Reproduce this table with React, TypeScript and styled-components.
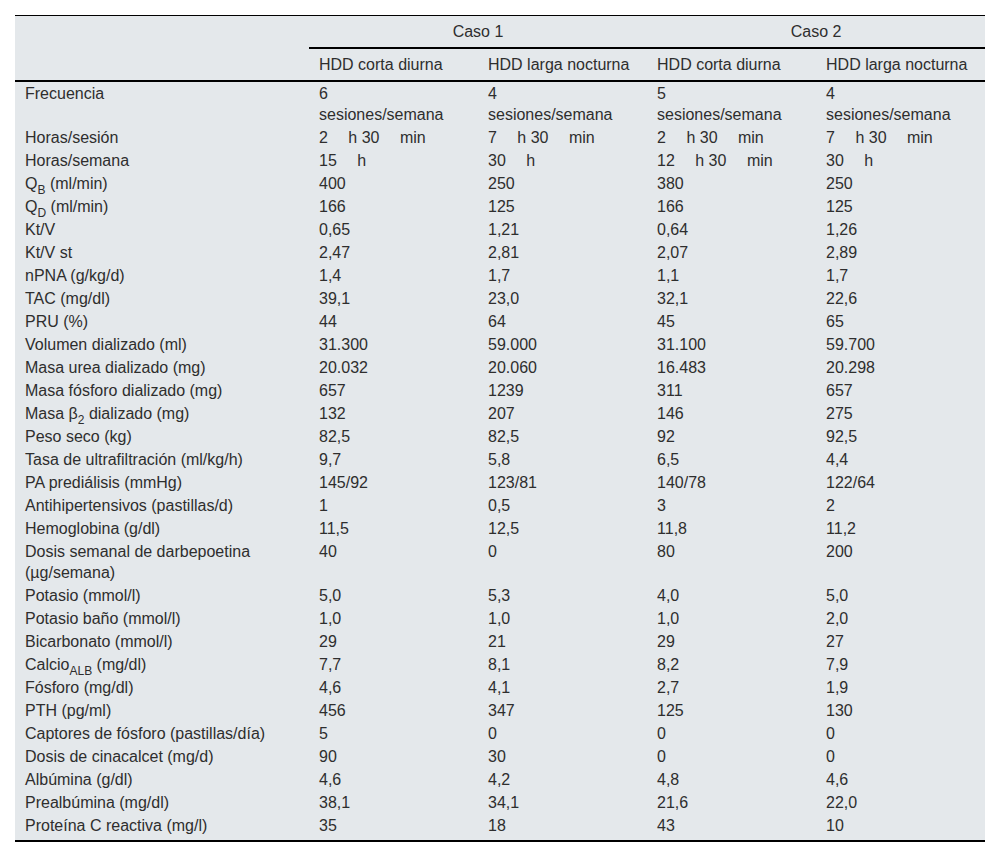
import React from "react";
import styled, { createGlobalStyle } from "styled-components";

const Global = createGlobalStyle`
  html, body { margin: 0; padding: 0; background: #ffffff; }
  body { font-family: "Liberation Sans", Arial, sans-serif; }
`;

const Page = styled.div`
  padding: 15px 15px 0 15px;
`;

const Table = styled.table`
  width: 970px;
  border-collapse: collapse;
  table-layout: fixed;
  background: #e4e8eb;
  color: #2e2e2e;
  font-family: "Liberation Sans", Arial, sans-serif;
  font-size: 16px;
  line-height: 21px;
  border-top: 1px solid #000;
  border-bottom: 2px solid #000;
`;

const LabelCol = styled.col`
  width: 294px;
`;

const DataCol = styled.col`
  width: 169px;
`;

const HeadRow = styled.tr<{ $rule?: "group" | "full" }>`
  border-bottom: ${(p) => (p.$rule === "full" ? "2px solid #000" : "none")};
`;

const GroupHead = styled.th`
  padding: 5px 10px;
  font-weight: normal;
  text-align: center;
  border-bottom: 2px solid #000;
`;

const BlankHead = styled.th`
  padding: 5px 10px;
  font-weight: normal;
`;

const SubHead = styled.th`
  padding: 5px 10px;
  font-weight: normal;
  text-align: left;
  white-space: nowrap;
`;

const Row = styled.tr<{ $last?: boolean }>`
  & > td {
    padding-bottom: ${(p) => (p.$last ? "4px" : "1px")};
  }
`;

const Cell = styled.td`
  padding: 1px 10px;
  text-align: left;
  vertical-align: top;
`;

const Sub = styled.sub`
  font-size: 12px;
  line-height: 0;
  vertical-align: -5px;
`;

const Hsp = styled.span`
  display: inline-block;
  width: 16px;
`;

type Val = React.ReactNode;

const dur = (a: string, h?: string, m?: boolean): Val => (
  <>
    {a} <Hsp />
    h{h ? ` ${h}` : ""}
    {m ? (
      <>
        {" "}
        <Hsp />
        min
      </>
    ) : null}
  </>
);

const ses = (n: string): Val => (
  <>
    {n}
    <br />
    sesiones/semana
  </>
);

const rows: [Val, Val, Val, Val, Val][] = [
  ["Frecuencia", ses("6"), ses("4"), ses("5"), ses("4")],
  ["Horas/sesión", dur("2", "30", true), dur("7", "30", true), dur("2", "30", true), dur("7", "30", true)],
  ["Horas/semana", dur("15"), dur("30"), dur("12", "30", true), dur("30")],
  [<>Q<Sub>B</Sub> (ml/min)</>, "400", "250", "380", "250"],
  [<>Q<Sub>D</Sub> (ml/min)</>, "166", "125", "166", "125"],
  ["Kt/V", "0,65", "1,21", "0,64", "1,26"],
  ["Kt/V st", "2,47", "2,81", "2,07", "2,89"],
  ["nPNA (g/kg/d)", "1,4", "1,7", "1,1", "1,7"],
  ["TAC (mg/dl)", "39,1", "23,0", "32,1", "22,6"],
  ["PRU (%)", "44", "64", "45", "65"],
  ["Volumen dializado (ml)", "31.300", "59.000", "31.100", "59.700"],
  ["Masa urea dializado (mg)", "20.032", "20.060", "16.483", "20.298"],
  ["Masa fósforo dializado (mg)", "657", "1239", "311", "657"],
  [<>Masa β<Sub>2</Sub> dializado (mg)</>, "132", "207", "146", "275"],
  ["Peso seco (kg)", "82,5", "82,5", "92", "92,5"],
  ["Tasa de ultrafiltración (ml/kg/h)", "9,7", "5,8", "6,5", "4,4"],
  ["PA prediálisis (mmHg)", "145/92", "123/81", "140/78", "122/64"],
  ["Antihipertensivos (pastillas/d)", "1", "0,5", "3", "2"],
  ["Hemoglobina (g/dl)", "11,5", "12,5", "11,8", "11,2"],
  ["Dosis semanal de darbepoetina (µg/semana)", "40", "0", "80", "200"],
  ["Potasio (mmol/l)", "5,0", "5,3", "4,0", "5,0"],
  ["Potasio baño (mmol/l)", "1,0", "1,0", "1,0", "2,0"],
  ["Bicarbonato (mmol/l)", "29", "21", "29", "27"],
  [<>Calcio<Sub>ALB</Sub> (mg/dl)</>, "7,7", "8,1", "8,2", "7,9"],
  ["Fósforo (mg/dl)", "4,6", "4,1", "2,7", "1,9"],
  ["PTH (pg/ml)", "456", "347", "125", "130"],
  ["Captores de fósforo (pastillas/día)", "5", "0", "0", "0"],
  ["Dosis de cinacalcet (mg/d)", "90", "30", "0", "0"],
  ["Albúmina (g/dl)", "4,6", "4,2", "4,8", "4,6"],
  ["Prealbúmina (mg/dl)", "38,1", "34,1", "21,6", "22,0"],
  ["Proteína C reactiva (mg/l)", "35", "18", "43", "10"],
];

const modes = ["HDD corta diurna", "HDD larga nocturna", "HDD corta diurna", "HDD larga nocturna"];

export default function App() {
  return (
    <Page>
      <Global />
      <Table>
        <colgroup>
          <LabelCol />
          <DataCol />
          <DataCol />
          <DataCol />
          <DataCol />
        </colgroup>
        <thead>
          <HeadRow $rule="group">
            <BlankHead />
            <GroupHead colSpan={2}>Caso 1</GroupHead>
            <GroupHead colSpan={2}>Caso 2</GroupHead>
          </HeadRow>
          <HeadRow $rule="full">
            <BlankHead />
            {modes.map((m, i) => (
              <SubHead key={i}>{m}</SubHead>
            ))}
          </HeadRow>
        </thead>
        <tbody>
          {rows.map((r, i) => (
            <Row key={i} $last={i === rows.length - 1}>
              {r.map((c, j) => (
                <Cell key={j}>{c}</Cell>
              ))}
            </Row>
          ))}
        </tbody>
      </Table>
    </Page>
  );
}
